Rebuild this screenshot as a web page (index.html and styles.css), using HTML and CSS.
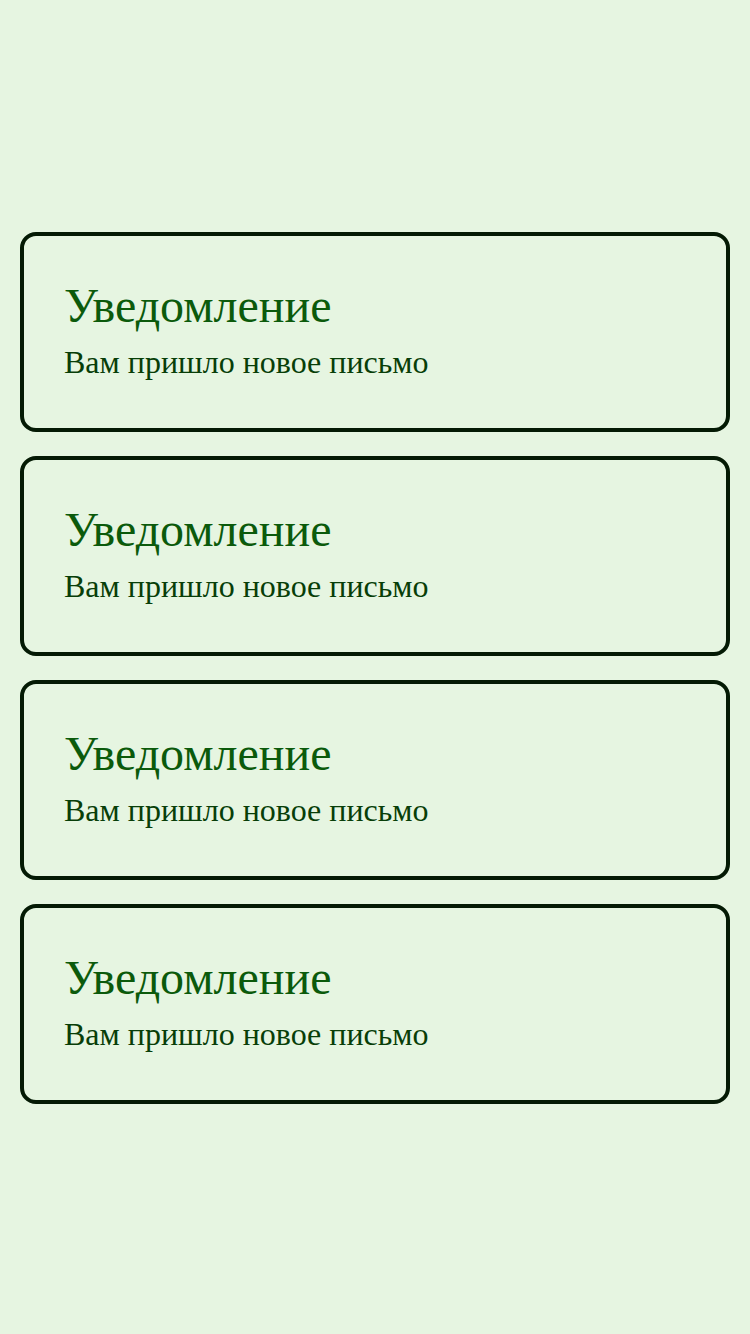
FILE: index.html
```html
<!DOCTYPE html>
<html lang="ru">
<head>
<meta charset="utf-8">
<title>Уведомления</title>
<link rel="stylesheet" href="styles.css">
</head>
<body>
<main class="list">
  <section class="card">
    <h2 class="title">Уведомление</h2>
    <p class="text">Вам пришло новое письмо</p>
  </section>
  <section class="card">
    <h2 class="title">Уведомление</h2>
    <p class="text">Вам пришло новое письмо</p>
  </section>
  <section class="card">
    <h2 class="title">Уведомление</h2>
    <p class="text">Вам пришло новое письмо</p>
  </section>
  <section class="card">
    <h2 class="title">Уведомление</h2>
    <p class="text">Вам пришло новое письмо</p>
  </section>
</main>
</body>
</html>
```

FILE: styles.css
```css
html, body {
  margin: 0;
  padding: 0;
}
body {
  background: #e6f5e1;
  font-family: "Liberation Serif", "Times New Roman", serif;
  box-sizing: border-box;
  min-height: 1334px;
  padding-top: 2px;
  display: flex;
  align-items: center;
  justify-content: center;
}
.list {
  width: 710px;
  display: flex;
  flex-direction: column;
  gap: 24px;
}
.card {
  box-sizing: border-box;
  height: 200px;
  border: 4px solid #041a04;
  border-radius: 16px;
  padding: 0 40px 4px;
  display: flex;
  flex-direction: column;
  justify-content: center;
}
.title {
  margin: 0 0 8px;
  font-weight: normal;
  font-size: 48px;
  line-height: 56px;
  color: #0b5a0b;
}
.text {
  margin: 0;
  font-size: 32px;
  line-height: 40px;
  color: #083e08;
}
```
